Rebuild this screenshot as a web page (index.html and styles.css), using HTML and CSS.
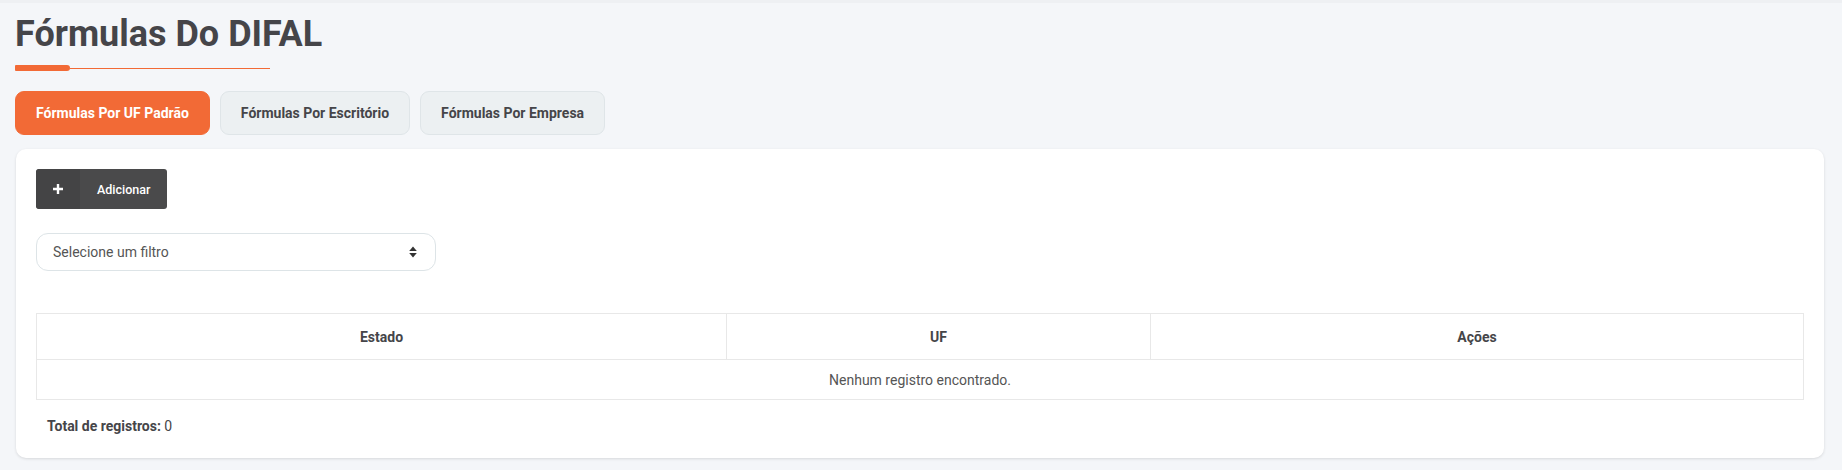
FILE: index.html
```html
<!DOCTYPE html>
<html lang="pt-BR">
<head>
<meta charset="utf-8">
<title>Fórmulas Do DIFAL</title>
<link rel="stylesheet" href="styles.css">
</head>
<body>
<div class="page">
  <header class="page-header">
    <h1 class="page-title">Fórmulas Do DIFAL</h1>
    <div class="title-rule"><span class="rule-thick"></span><span class="rule-thin"></span></div>
  </header>

  <nav class="tabs">
    <button class="tab tab-active">Fórmulas Por UF Padrão</button>
    <button class="tab">Fórmulas Por Escritório</button>
    <button class="tab">Fórmulas Por Empresa</button>
  </nav>

  <section class="card">
    <div class="actions">
      <button class="btn-add">
        <span class="btn-add-icon">
          <svg width="12" height="12" viewBox="0 0 12 12"><path d="M6 1v10M1 6h10" stroke="#fff" stroke-width="2.4" stroke-linecap="butt"/></svg>
        </span>
        <span class="btn-add-label">Adicionar</span>
      </button>
    </div>

    <div class="filter">
      <div class="select">
        <span class="select-text">Selecione um filtro</span>
        <svg class="select-arrows" width="8" height="12" viewBox="0 0 8 12"><path d="M4 0.5L7.8 5H0.2z" fill="#333"/><path d="M4 11.5L7.8 7H0.2z" fill="#333"/></svg>
      </div>
    </div>

    <table class="grid">
      <colgroup>
        <col class="col-estado">
        <col class="col-uf">
        <col class="col-acoes">
      </colgroup>
      <thead>
        <tr><th>Estado</th><th>UF</th><th>Ações</th></tr>
      </thead>
      <tbody>
        <tr><td colspan="3" class="empty">Nenhum registro encontrado.</td></tr>
      </tbody>
    </table>

    <p class="total"><strong>Total de registros:</strong> 0</p>
  </section>
</div>
</body>
</html>
```

FILE: styles.css
```css
* { box-sizing: border-box; }

html, body {
  margin: 0;
  padding: 0;
  background: #f4f6f9;
  font-family: Roboto, "Liberation Sans", Arial, sans-serif;
  color: #444;
}

body {
  border-top: 3px solid #eef0f3;
}

.page {
  padding: 10px 18px 13px 15px;
}

.page-title {
  margin: 0;
  font-size: 36px;
  font-weight: 700;
  line-height: 42px;
  color: #454549;
}

.title-rule {
  width: 255px;
  height: 6px;
  margin-top: 10px;
  display: flex;
  align-items: center;
}

.rule-thick {
  width: 55px;
  height: 6px;
  background: #f26a36;
  border-radius: 1px 3px 3px 1px;
}

.rule-thin {
  flex: 1;
  height: 1px;
  background: #f26a36;
}

.tabs {
  display: flex;
  gap: 10px;
  margin-top: 20px;
}

.tab {
  height: 44px;
  padding: 0 20px;
  border: 1px solid #dfe5e8;
  border-radius: 9px;
  background: #ecf0f2;
  font-family: inherit;
  font-size: 14px;
  font-weight: 700;
  color: #454549;
  cursor: pointer;
}

.tab-active {
  background: #f26a36;
  border-color: #f26a36;
  color: #fff;
}

.card {
  margin-top: 14px;
  margin-left: 1px;
  background: #fff;
  border-radius: 10px;
  box-shadow: 0 1px 3px rgba(0, 0, 0, 0.12);
  padding: 20px 20px 24px 20px;
}

.btn-add {
  display: flex;
  align-items: stretch;
  height: 40px;
  padding: 0;
  border: 0;
  border-radius: 3px;
  background: #4a4a4b;
  color: #fff;
  font-family: inherit;
  cursor: pointer;
  overflow: hidden;
}

.btn-add-icon {
  width: 44px;
  display: flex;
  align-items: center;
  justify-content: center;
  background: #444445;
  border-radius: 3px 0 0 3px;
}

.btn-add-label {
  display: flex;
  align-items: center;
  padding: 0 17px 0 17px;
  font-size: 12.5px;
  font-weight: 500;
}

.filter {
  margin-top: 24px;
}

.select {
  width: 400px;
  height: 38px;
  border: 1px solid #dde4e7;
  border-radius: 12px;
  display: flex;
  align-items: center;
  justify-content: space-between;
  padding: 0 18px 0 16px;
}

.select-text {
  font-size: 14px;
  color: #555;
}

.grid {
  margin-top: 42px;
  width: 100%;
  border-collapse: collapse;
  table-layout: fixed;
}

.col-estado { width: 39.05%; }
.col-uf { width: 24%; }
.col-acoes { width: 36.95%; }

.grid th,
.grid td {
  border: 1px solid #e8e8e8;
  text-align: center;
}

.grid th {
  height: 46px;
  font-size: 14px;
  font-weight: 700;
  color: #454549;
}

.grid td {
  height: 40px;
  font-size: 14px;
  color: #555;
}

.total {
  margin: 18px 0 0 11px;
  font-size: 14px;
  color: #454549;
}

.total strong {
  font-weight: 700;
}
```
